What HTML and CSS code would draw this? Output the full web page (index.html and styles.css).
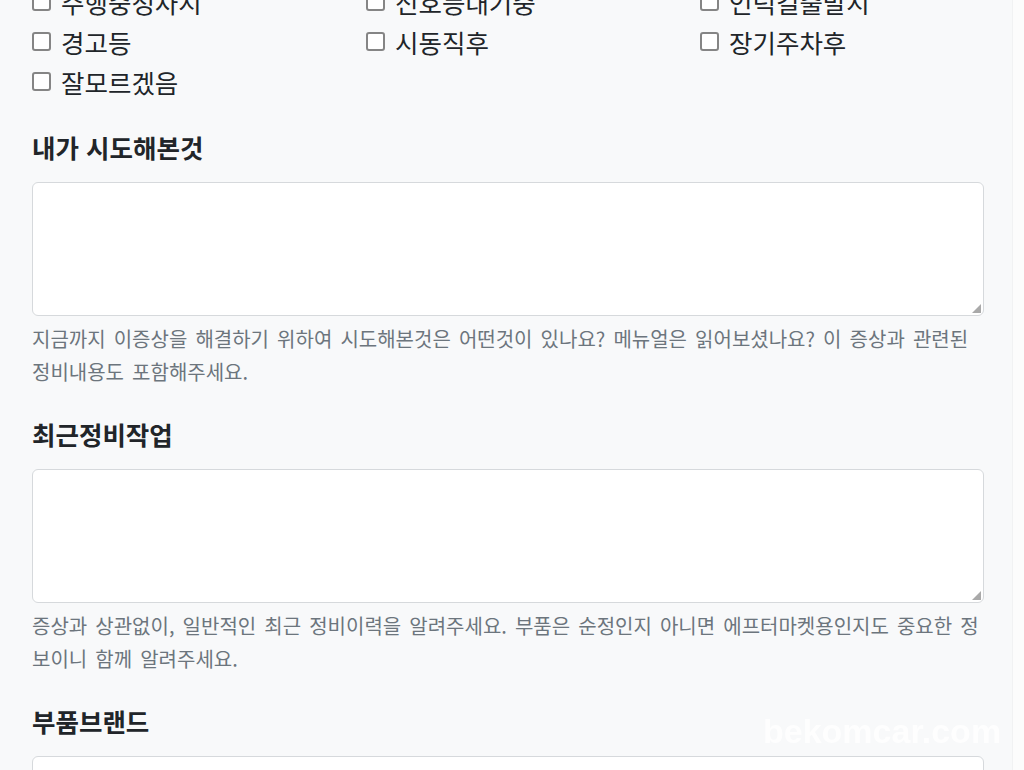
FILE: index.html
```html
<!DOCTYPE html>
<html lang="ko">
<head>
  <meta charset="UTF-8">
  <meta name="viewport" content="width=device-width, initial-scale=1.0">
  <title>증상 문의</title>
  <link rel="stylesheet" href="styles.css">
</head>
<body>
  <div class="page">
    <div class="checks">
      <label class="check"><span class="box"></span>주행중정차시</label>
      <label class="check"><span class="box"></span>신호등대기중</label>
      <label class="check"><span class="box"></span>언덕길출발시</label>
      <label class="check"><span class="box"></span>경고등</label>
      <label class="check"><span class="box"></span>시동직후</label>
      <label class="check"><span class="box"></span>장기주차후</label>
      <label class="check"><span class="box"></span>잘모르겠음</label>
    </div>

    <div class="field">
      <h2 class="field-title">내가 시도해본것</h2>
      <div class="area"><textarea></textarea></div>
      <p class="help">지금까지 이증상을 해결하기 위하여 시도해본것은 어떤것이 있나요? 메뉴얼은 읽어보셨나요? 이 증상과 관련된 정비내용도 포함해주세요.</p>
    </div>

    <div class="field">
      <h2 class="field-title">최근정비작업</h2>
      <div class="area"><textarea></textarea></div>
      <p class="help">증상과 상관없이, 일반적인 최근 정비이력을 알려주세요. 부품은 순정인지 아니면 에프터마켓용인지도 중요한 정보이니 함께 알려주세요.</p>
    </div>

    <div class="field">
      <h2 class="field-title">부품브랜드</h2>
      <div class="area"><textarea></textarea></div>
    </div>
  </div>
  <div class="scroll-strip"></div>

  <div class="watermark">bekomcar.com</div>
</body>
</html>
```

FILE: styles.css
```css
html, body {
  height: 100%;
  overflow: hidden;
}

body {
  margin: 0;
  display: flex;
  background: #f8f9fa;
  color: #212529;
  font-family: "Noto Sans CJK KR", "Noto Sans", sans-serif;
}

.page {
  flex: 1;
  padding: 0 28px 0 32px;
}

.scroll-strip {
  width: 11px;
  background: #fcfcfc;
  border-left: 1px solid #f1f2f3;
}

/* checkbox rows */
.checks {
  display: grid;
  grid-template-columns: 334px 334px 1fr;
  margin-top: -19px;
}

.check {
  display: flex;
  align-items: center;
  height: 40px;
  font-size: 25.5px;
}

.box {
  width: 15px;
  height: 15px;
  border: 2px solid #858585;
  border-radius: 3px;
  background: #fff;
  margin-right: 10px;
}

/* text fields */
.field {
  margin-top: 30px;
}

.field-title {
  margin: 0 0 19px;
  font-size: 25.5px;
  line-height: 32px;
  font-weight: 700;
}

.area {
  position: relative;
  height: 132px;
  background: #fff;
  border: 1px solid #d6d9dc;
  border-radius: 6px;
}

.area textarea {
  width: 100%;
  height: 100%;
  border: none;
  background: transparent;
  resize: none;
  outline: none;
}

.area::after {
  content: "";
  position: absolute;
  right: 2px;
  bottom: 2px;
  border-left: 9px solid transparent;
  border-bottom: 9px solid #a9a9a9;
}

.help {
  margin: 6px 0 0;
  font-size: 20px;
  line-height: 33px;
  word-spacing: 2.5px;
  color: #6c757d;
}

.watermark {
  position: fixed;
  left: 763px;
  top: 712px;
  font-family: "Liberation Sans", Arial, sans-serif;
  font-weight: 700;
  font-size: 34px;
  color: rgba(255, 255, 255, 0.8);
}
```
